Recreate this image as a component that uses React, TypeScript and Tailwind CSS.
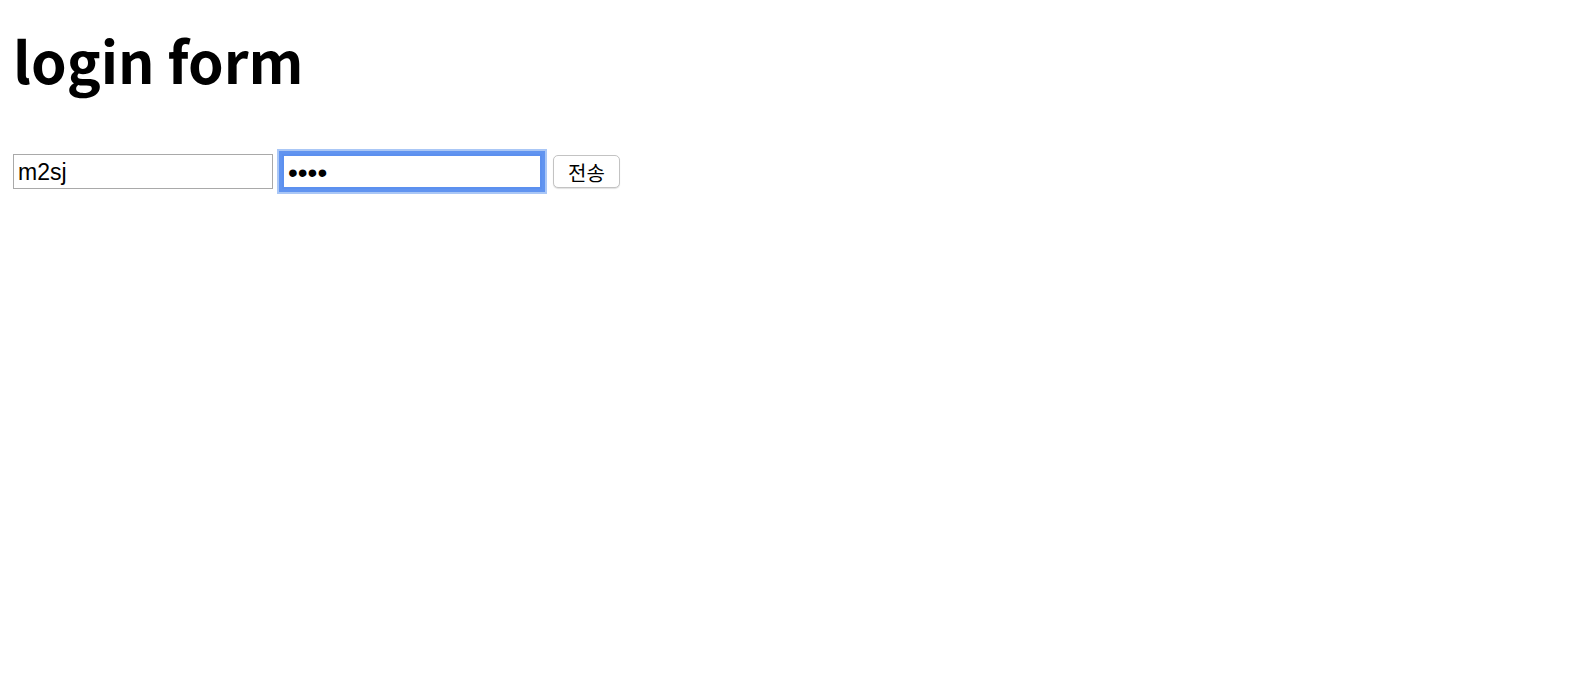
export default function App() {
  return (
    <div className="min-h-screen bg-white pl-[13px] text-black">
      <h1 className="pt-[31px] text-[57px] font-bold leading-none font-['Noto_Sans_CJK_KR','Noto_Sans',sans-serif]">
        login form
      </h1>
      <form className="mt-[66px] flex items-center" onSubmit={(e) => e.preventDefault()}>
        <input
          type="text"
          defaultValue="m2sj"
          className="h-[35px] w-[260px] border border-[#a9a9a9] bg-white px-[4px] pt-[2px] text-[23px] font-['Liberation_Sans',Arial,sans-serif] outline-none"
        />
        <input
          type="password"
          defaultValue="1234"
          className="ml-[9px] h-[35px] w-[260px] border-2 border-[#5c90ef] bg-white px-[4px] pt-[2px] text-[28px] font-['Liberation_Sans',Arial,sans-serif] shadow-[0_0_0_3px_#6194f0,0_0_0_5px_#aac7f6] outline-none"
        />
        <button
          type="submit"
          className="ml-[11px] h-[33px] w-[67px] rounded-[5px] border border-[#c3c3c3] bg-white pt-[2px] text-[20px] leading-none font-['Noto_Sans_CJK_KR',sans-serif] shadow-[0_1px_1px_rgba(0,0,0,0.12)]"
        >
          전송
        </button>
      </form>
    </div>
  );
}
